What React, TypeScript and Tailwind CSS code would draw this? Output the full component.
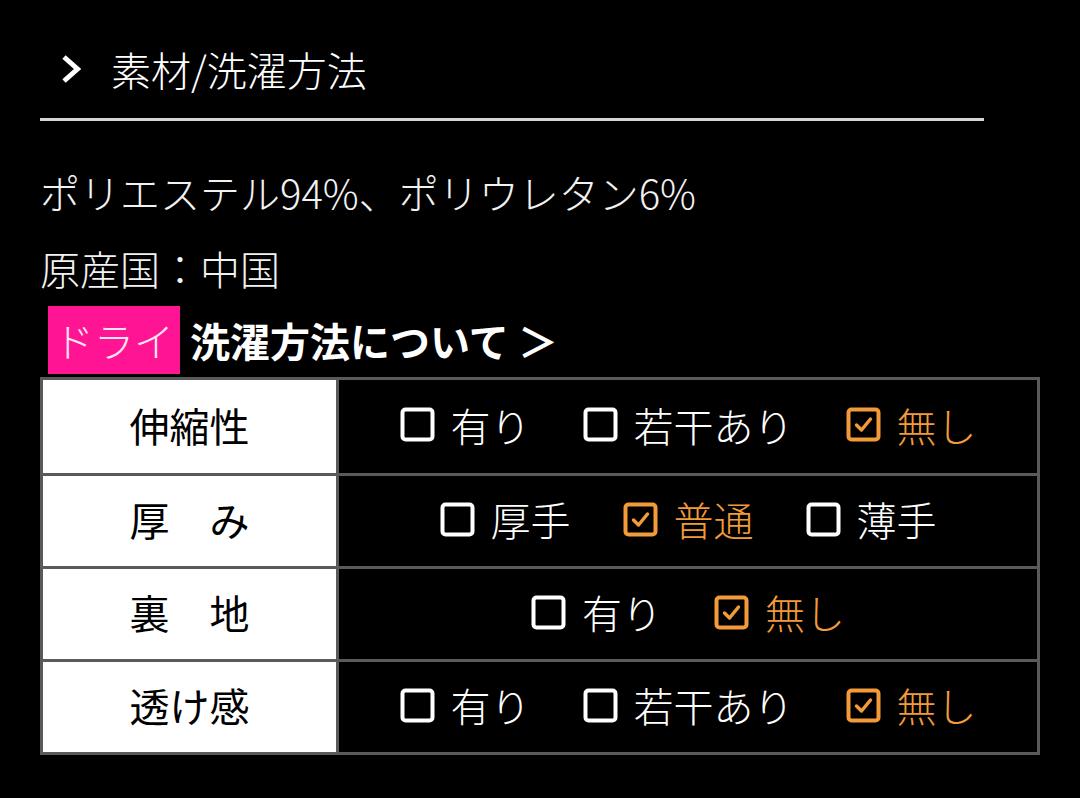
import React from "react";

type Opt = { label: string; checked?: boolean };

const rows: { name: string; options: Opt[] }[] = [
  {
    name: "伸縮性",
    options: [{ label: "有り" }, { label: "若干あり" }, { label: "無し", checked: true }],
  },
  {
    name: "厚　み",
    options: [{ label: "厚手" }, { label: "普通", checked: true }, { label: "薄手" }],
  },
  {
    name: "裏　地",
    options: [{ label: "有り" }, { label: "無し", checked: true }],
  },
  {
    name: "透け感",
    options: [{ label: "有り" }, { label: "若干あり" }, { label: "無し", checked: true }],
  },
];

function CheckBox({ checked }: { checked?: boolean }) {
  return (
    <svg width="35" height="35" viewBox="0 0 35 35" className="shrink-0">
      <rect
        x="2.5"
        y="2.5"
        width="30"
        height="30"
        rx="3"
        fill="none"
        stroke={checked ? "#f29b38" : "#ffffff"}
        strokeWidth="4"
      />
      {checked && (
        <path
          d="M10.5 18 L15.5 23 L24.5 12"
          fill="none"
          stroke="#f29b38"
          strokeWidth="3.5"
          strokeLinecap="round"
          strokeLinejoin="round"
        />
      )}
    </svg>
  );
}

export default function App() {
  return (
    <div
      className="min-h-[798px] w-[1080px] bg-black text-white"
      style={{ fontFamily: '"Noto Sans CJK JP", "Noto Sans", sans-serif' }}
    >
      <div className="pl-[40px]">
        {/* header */}
        <div className="w-[944px] border-b-[3px] border-[#d4d4d4] pt-[42px] pb-[22px]">
          <div className="flex items-center pl-[20px] text-[40px] leading-[54px]">
            <svg width="24" height="30" viewBox="0 0 24 30" className="shrink-0">
              <path
                d="M4 3 L17.5 15 L4 27"
                fill="none"
                stroke="#ffffff"
                strokeWidth="5"
                strokeLinejoin="miter"
              />
            </svg>
            <span className="ml-[27px] font-light">素材/洗濯方法</span>
          </div>
        </div>

        <div className="mt-[33px] text-[40px] leading-[76px] font-light text-[#f2f2f2]">
          <p>ポリエステル94%、ポリウレタン6%</p>
          <p>原産国：中国</p>
        </div>

        <div className="flex items-center">
          <span className="ml-[8px] flex h-[68px] items-center bg-[#ff1493] px-[6px] text-[40px] font-light text-[#ffe6f3]">
            ドライ
          </span>
          <span className="ml-[10px] text-[40px] font-bold">洗濯方法について ＞</span>
        </div>

        {/* table */}
        <div className="mt-[3px] w-[1000px] border-[3px] border-[#5a5a5a]">
          {rows.map((row, i) => (
            <div
              key={row.name}
              className={`flex h-[93px] ${i > 0 ? "border-t-[3px] border-[#5a5a5a]" : ""}`}
            >
              <div className="flex w-[296px] shrink-0 items-center justify-center border-r-[3px] border-[#5a5a5a] bg-white pb-[4px] text-[40px] text-black">
                {row.name}
              </div>
              <div className="flex flex-1 items-center justify-center gap-[52px] pb-[4px]">
                {row.options.map((o) => (
                  <div key={o.label} className="flex items-center gap-[16px]">
                    <CheckBox checked={o.checked} />
                    <span
                      className={`text-[40px] font-light ${o.checked ? "text-[#f29b38]" : "text-white"}`}
                    >
                      {o.label}
                    </span>
                  </div>
                ))}
              </div>
            </div>
          ))}
        </div>
      </div>
    </div>
  );
}
